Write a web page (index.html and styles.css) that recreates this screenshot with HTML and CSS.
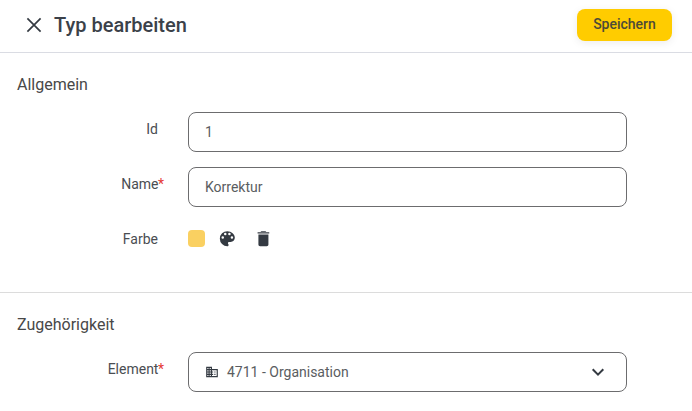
FILE: index.html
```html
<!DOCTYPE html>
<html lang="de">
<head>
    <meta charset="UTF-8">
    <meta name="viewport" content="width=device-width, initial-scale=1.0">
    <title>Typ bearbeiten</title>
    <link rel="stylesheet" href="styles.css">
</head>
<body>

    <header class="header">
        <button type="button" class="icon-button" aria-label="Schließen">
            <svg width="24" height="24" viewBox="0 0 24 24"><path d="M5.4 5.4l13.2 13.2M18.6 5.4L5.4 18.6" fill="none" stroke="currentColor" stroke-width="1.7"/></svg>
        </button>
        <h1>Typ bearbeiten</h1>
        <button type="submit" form="typeForm" class="save-button">Speichern</button>
    </header>

    <form id="typeForm">
        <section class="section">
            <h2>Allgemein</h2>
            <div class="row">
                <label for="type-id">Id</label>
                <input type="text" id="type-id" class="field" value="1">
            </div>
            <div class="row">
                <label for="type-name">Name<span class="required">*</span></label>
                <input type="text" id="type-name" class="field" value="Korrektur">
            </div>
            <div class="row">
                <label>Farbe</label>
                <div class="color-tools">
                    <span class="swatch"></span>
                    <button type="button" class="icon-button palette" aria-label="Farbe wählen">
                        <svg width="20" height="20" viewBox="-0.4 0.4 24 24"><path fill="currentColor" d="M12 3a9 9 0 0 0 0 18c.83 0 1.5-.67 1.5-1.5 0-.39-.15-.74-.39-1.01-.23-.26-.38-.61-.38-.99 0-.83.67-1.5 1.5-1.5H16c2.76 0 5-2.24 5-5 0-4.42-4.03-8-9-8zm-5.5 9a1.5 1.5 0 1 1 0-3 1.5 1.5 0 0 1 0 3zm3-4a1.5 1.5 0 1 1 0-3 1.5 1.5 0 0 1 0 3zm5 0a1.5 1.5 0 1 1 0-3 1.5 1.5 0 0 1 0 3zm3 4a1.5 1.5 0 1 1 0-3 1.5 1.5 0 0 1 0 3z"/></svg>
                    </button>
                    <button type="button" class="icon-button" aria-label="Farbe löschen">
                        <svg width="20" height="20" viewBox="-0.5 0.4 24 24"><path fill="currentColor" d="M6 19c0 1.100.9 2 2 2h8c1.100 0 2-.9 2-2V7H6v12zM15.500 4l-1-1h-5l-1 1z"/><path fill="currentColor" opacity="0.75" d="M5 4h14v2H5z"/></svg>
                    </button>
                </div>
            </div>
        </section>

        <section class="section">
            <h2>Zugehörigkeit</h2>
            <div class="row">
                <label>Element<span class="required">*</span></label>
                <div class="field select" role="combobox" tabindex="0">
                    <svg width="14" height="14" viewBox="0 0 24 24"><path fill="currentColor" d="M12 7V3H2v18h20V7H12zM6 19H4v-2h2v2zm0-4H4v-2h2v2zm0-4H4V9h2v2zm0-4H4V5h2v2zm4 12H8v-2h2v2zm0-4H8v-2h2v2zm0-4H8V9h2v2zm0-4H8V5h2v2zm10 12h-8v-2h2v-2h-2v-2h2v-2h-2V9h8v10zm-2-8h-2v2h2v-2zm0 4h-2v2h2v-2z"/></svg>
                    <span class="select-value">4711 - Organisation</span>
                    <svg width="24" height="24" viewBox="0 0 24 24"><path d="M6.700 9.300L12 14.600l5.300-5.300" fill="none" stroke="currentColor" stroke-width="2"/></svg>
                </div>
            </div>
        </section>
    </form>

</body>
</html>
```
FILE: styles.css
```css
* {
    box-sizing: border-box;
}

body {
    margin: 0;
    font-family: Roboto, "Liberation Sans", sans-serif;
    font-size: 14px;
    color: #4a4d52;
    background-color: #fff;
}

/* Kopfzeile */
.header {
    display: flex;
    align-items: center;
    height: 53px;
    padding: 0 20px 3px 22px;
    border-bottom: 1px solid #dadce3;
}

h1 {
    flex: 1;
    margin: 0 0 0 8px;
    font-size: 20px;
    font-weight: 500;
    line-height: 24px;
    color: #3b4149;
}

.icon-button {
    display: flex;
    padding: 0;
    border: none;
    background: none;
    color: #343a42;
    cursor: pointer;
}

.save-button {
    width: 95px;
    height: 32px;
    padding: 0 0 2px;
    border: none;
    border-radius: 8px;
    background-color: #ffcc00;
    box-shadow: 0 2px 8px rgba(0, 0, 0, 0.08);
    color: #4c4a38;
    font-family: inherit;
    font-size: 14px;
    font-weight: 500;
    cursor: pointer;
}

/* Abschnitte */
.section {
    height: 240px;
    padding: 22px 17px 0;
    border-bottom: 1px solid #dcdcdc;
}

.section:last-child {
    height: auto;
    border-bottom: none;
}

h2 {
    margin: 0 0 17px;
    font-size: 16px;
    font-weight: 400;
    line-height: 20px;
    color: #484848;
}

.row {
    display: grid;
    grid-template-columns: 141px 439px;
    column-gap: 30px;
    margin-bottom: 15px;
}

.row label {
    padding-top: 9px;
    line-height: 16px;
    text-align: right;
}

.required {
    margin-right: -6px;
    margin-left: -0.5px;
    color: #e53935;
}

.field {
    width: 100%;
    height: 40px;
    padding: 0 16px;
    border: 1px solid #6c6c6e;
    border-radius: 8px;
    background-color: #fff;
    color: #5a5d61;
    font-family: inherit;
    font-size: 14px;
}

/* Farbauswahl */
.color-tools {
    display: flex;
    align-items: center;
    height: 33px;
}

.swatch {
    width: 17px;
    height: 17px;
    border-radius: 4px;
    background-color: #fad061;
}

.palette {
    margin: 0 16px 0 12px;
}

/* Auswahlfeld */
.select {
    display: flex;
    align-items: center;
    color: #343a42;
}

.select-value {
    flex: 1;
    margin-left: 8px;
    color: #5a5d61;
}
```
